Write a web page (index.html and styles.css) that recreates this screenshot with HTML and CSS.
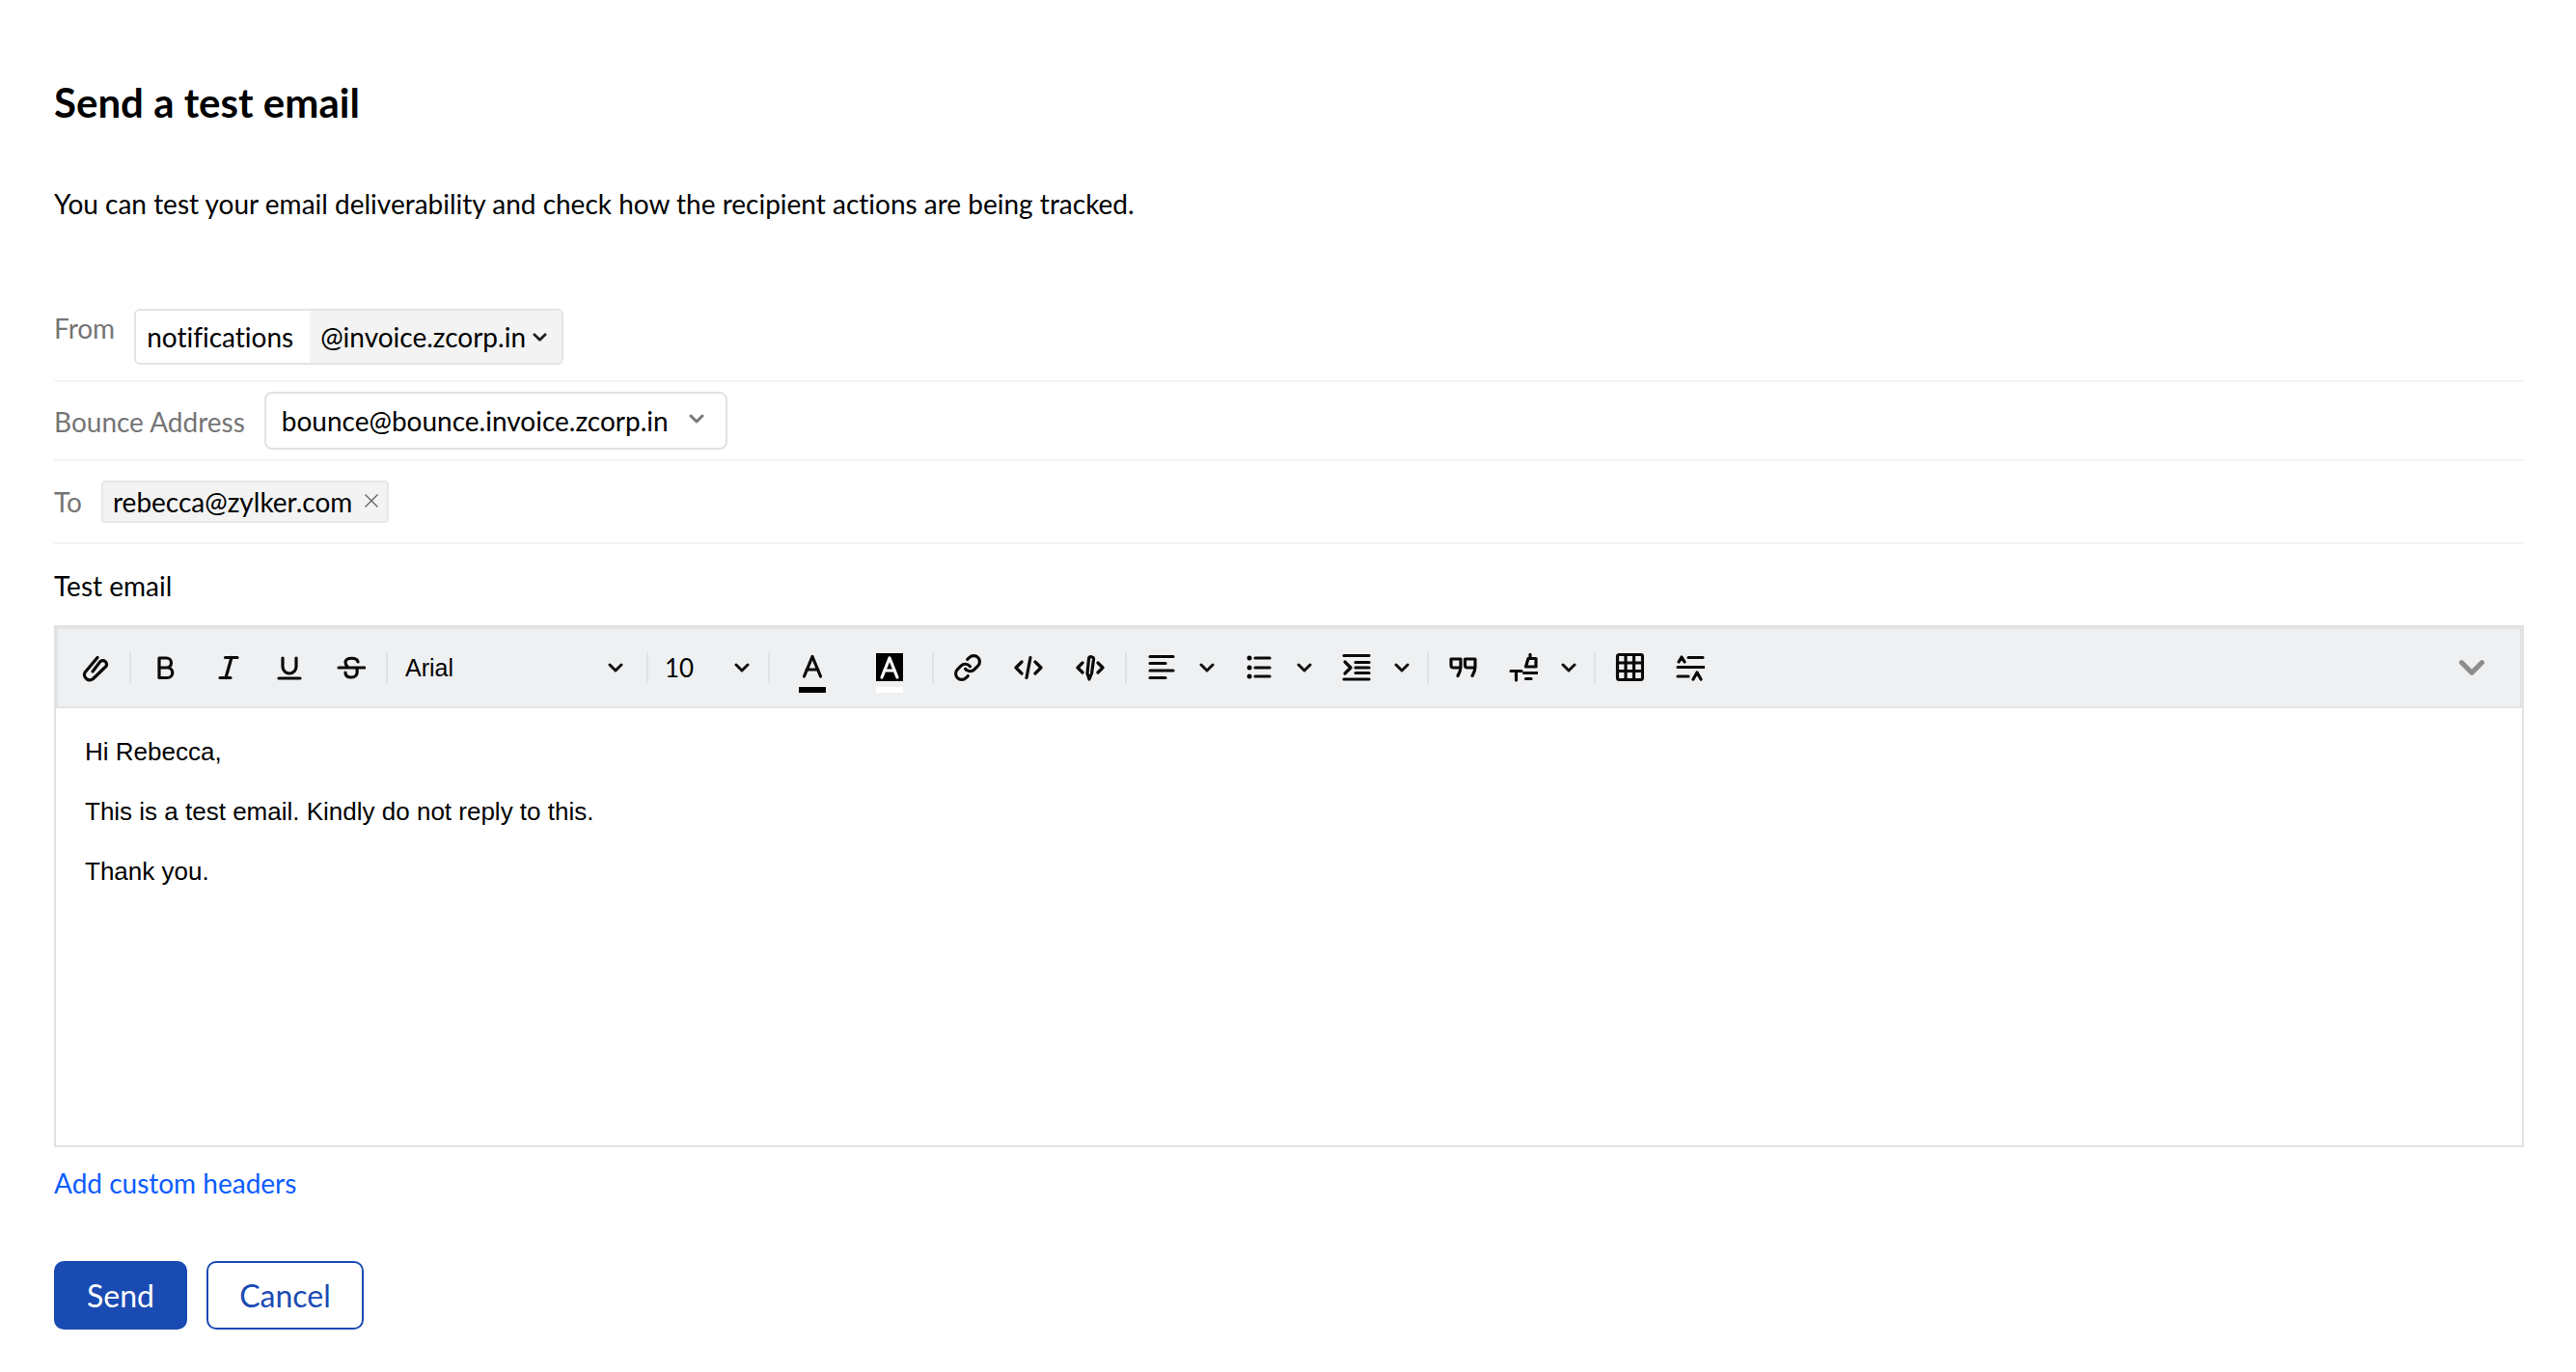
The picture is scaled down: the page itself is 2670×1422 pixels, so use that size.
FILE: index.html
```html
<!DOCTYPE html>
<html lang="en">
<head>
    <meta charset="UTF-8">
    <title>Send a test email</title>
    <link rel="stylesheet" href="styles.css">
</head>
<body>
    <svg class="defs" width="0" height="0">
        <symbol id="chev" viewBox="0 0 16 16"><path d="M2 5l6 6 6-6" fill="none" stroke="currentColor" stroke-width="3" stroke-linecap="round" stroke-linejoin="round"/></symbol>
    </svg>

    <div class="page">
        <h1>Send a test email</h1>
        <p class="intro">You can test your email deliverability and check how the recipient actions are being tracked.</p>

        <div class="row row-from">
            <label class="row-label">From</label>
            <div class="from-box">
                <span class="from-name">notifications</span>
                <span class="from-domain">@invoice.zcorp.in<svg class="chev-sm"><use href="#chev"/></svg></span>
            </div>
        </div>
        <div class="row row-bounce">
            <label class="row-label">Bounce Address</label>
            <div class="bounce-box">
                <span>bounce@bounce.invoice.zcorp.in</span>
                <svg class="chev-grey"><use href="#chev"/></svg>
            </div>
        </div>
        <div class="row row-to">
            <label class="row-label">To</label>
            <div class="chip">
                <span>rebecca@zylker.com</span>
                <svg class="chip-x" viewBox="0 0 14 14"><path d="M.5 .5l13 13M13.500 .5l-13 13" stroke="#666" stroke-width="1.4" fill="none"/></svg>
            </div>
        </div>

        <div class="test-label">Test email</div>

        <div class="editor">
            <div class="toolbar">
                <button class="tb"><svg viewBox="0 0 30 30"><path d="M13 19L21 8.500a4 4 0 0 1 6 5L13.500 26.500a5.500 5.500 0 0 1-8.500-6.500L18 4.500"/></svg></button>
                <i class="sep"></i>
                <button class="tb"><svg viewBox="0 0 30 30"><path d="M8 5h7.500a5 5 0 0 1 0 10H8zM8 15h8.500a5 5 0 0 1 0 10.500H8z"/></svg></button>
                <button class="tb"><svg viewBox="0 0 30 30"><path d="M12.500 4.500H25M7 25.500h11M19 4.500l-6 21"/></svg></button>
                <button class="tb"><svg viewBox="0 0 30 30"><path d="M8 5v9a7 7 0 0 0 14 0V5M4 26h22"/></svg></button>
                <button class="tb"><svg viewBox="0 0 30 30"><path d="M22 9c-1-5-12-5-13 0 0 2 1 4 2 5M2 15h27M21 17c1 6-2 8-6 8s-6-2-6-5"/></svg></button>
                <i class="sep"></i>
                <div class="tb-select font-select"><span>Arial</span><svg class="chev-tb"><use href="#chev"/></svg></div>
                <i class="sep"></i>
                <div class="tb-select size-select"><span>10</span><svg class="chev-tb"><use href="#chev"/></svg></div>
                <i class="sep"></i>
                <button class="tb tb-color"><svg viewBox="0 0 30 42"><path d="M6.500 24L15 3.500 23.500 24M9 17h12"/><rect x="1" y="35" width="28" height="6" class="fill-k"/></svg></button>
                <button class="tb tb-color"><svg viewBox="0 0 30 42"><rect x="1" y="0" width="28" height="29" class="fill-k"/><path class="st-w" d="M7 25L15 5l8 20M9.500 18h11"/><rect x="1" y="35" width="28" height="6" class="fill-w"/></svg></button>
                <i class="sep"></i>
                <button class="tb tb-62"><svg viewBox="0 0 24 24"><path class="thin" d="M10 13a5 5 0 0 0 7.540.540l3-3a5 5 0 0 0-7.070-7.070l-1.720 1.710"/><path class="thin" d="M14 11a5 5 0 0 0-7.540-.540l-3 3a5 5 0 0 0 7.070 7.070l1.710-1.710"/></svg></button>
                <button class="tb"><svg viewBox="0 0 30 30"><path d="M8 9l-6 6 6 6M22 9l6 6-6 6M17 4.500l-4 21"/></svg></button>
                <button class="tb"><svg viewBox="0 0 30 30"><path d="M7 10l-5 5 5 5M23 10l5 5-5 5M13.500 6a2.500 2.500 0 0 1 5 .5L16.500 21 14 27l-2-6z"/></svg></button>
                <i class="sep"></i>
                <button class="tb"><svg viewBox="0 0 30 30"><path d="M3 3.500h24M3 10.500h16M3 18h24M3 25.500h16"/></svg></button>
                <button class="tb-chev"><svg class="chev-tb"><use href="#chev"/></svg></button>
                <button class="tb tb-list"><svg viewBox="0 0 30 30"><path d="M11 5h15M11 15h15M11 24h15"/><circle cx="5" cy="5" r="2.500" class="fill-k"/><circle cx="5" cy="15" r="2.500" class="fill-k"/><circle cx="5" cy="24" r="2.500" class="fill-k"/></svg></button>
                <button class="tb-chev"><svg class="chev-tb"><use href="#chev"/></svg></button>
                <button class="tb tb-list"><svg viewBox="0 0 30 30"><path d="M2 2.500h26M2 27h26M3 9l6 6-6 6M14 9.500h14M14 15h14M14 20.500h14"/></svg></button>
                <button class="tb-chev"><svg class="chev-tb"><use href="#chev"/></svg></button>
                <i class="sep sep-after-chev"></i>
                <button class="tb tb-62"><svg viewBox="0 0 30 30"><path d="M3 6h10v8q0 5-3 9.500M3 6v6.500q0 2.500 2.500 2.500H13M17.500 6H28v8q0 5-3 9.500M17.500 6v6.500q0 2.500 2.500 2.500h8"/></svg></button>
                <button class="tb"><svg viewBox="0 0 30 30"><path d="M2 18.500h11M7.500 18.500V28M22 1.500V5M20 5.500l-2.500 8.500H28V5.500zM15.500 20.500H29.500M17.500 26.500H23"/></svg></button>
                <button class="tb-chev"><svg class="chev-tb"><use href="#chev"/></svg></button>
                <i class="sep sep-after-chev"></i>
                <button class="tb tb-62"><svg viewBox="0 0 30 30"><rect x="2.500" y="1.500" width="26" height="26" rx="2"/><path d="M11 1.500v26M19.500 1.500v26M2.500 10h26M2.500 18.500h26"/></svg></button>
                <button class="tb"><svg viewBox="0 0 30 30"><path d="M3 9l3-5 3 5M13 4.500h15M2 14.500h27M2 24h11M18 27l4-7 4 7"/></svg></button>
                <button class="tb tb-more"><svg class="chev-more"><use href="#chev"/></svg></button>
            </div>
            <div class="editor-body">
                <p>Hi Rebecca,</p>
                <p>This is a test email. Kindly do not reply to this.</p>
                <p>Thank you.</p>
            </div>
        </div>

        <a class="custom-link" href="#">Add custom headers</a>

        <div class="actions">
            <button class="btn btn-primary">Send</button>
            <button class="btn btn-outline">Cancel</button>
        </div>
    </div>
</body>
</html>
```

FILE: styles.css
```css
* {
    margin: 0;
    padding: 0;
    box-sizing: border-box;
}

body {
    font-family: 'Lato', sans-serif;
    font-size: 28px;
    font-variant-ligatures: none;
    background: #fff;
    color: #000;
    overflow: hidden;
}

.defs {
    position: absolute;
}

.page {
    padding: 78px 54px 0 56px;
}

h1 {
    font-size: 42px;
    line-height: 56px;
    font-weight: 700;
}

.intro {
    margin-top: 57px;
    line-height: 40px;
}

.row {
    display: flex;
    gap: 20px;
    border-bottom: 2px solid #f4f4f4;
}

.row-label {
    color: #757575;
}

.row-from {
    margin-top: 89px;
    padding-bottom: 16px;
}

.row-from .row-label {
    line-height: 40px;
}

.row-bounce {
    padding: 10px 0;
}

.row-bounce .row-label {
    line-height: 44px;
    padding-top: 9px;
}

.row-to {
    padding: 20px 0;
}

.row-to .row-label {
    line-height: 44px;
}

.from-box {
    display: flex;
    height: 58px;
    border: 2px solid #e4e4e4;
    border-radius: 6px;
    line-height: 54px;
    overflow: hidden;
}

.from-name {
    width: 180px;
    padding-left: 11px;
}

.from-domain {
    display: flex;
    align-items: center;
    width: 261px;
    padding-left: 11px;
    background: #f3f3f3;
}

.chev-sm {
    width: 15px;
    height: 15px;
    margin-left: 7px;
    color: #222;
}

.bounce-box {
    display: flex;
    align-items: center;
    justify-content: space-between;
    width: 480px;
    height: 60px;
    padding: 0 22px 0 16px;
    border: 2px solid #e2e2e2;
    border-radius: 8px;
}

.chev-grey {
    width: 16px;
    height: 16px;
    margin-top: -4px;
    color: #777;
}

.chip {
    display: flex;
    align-items: center;
    width: 298px;
    height: 44px;
    padding-left: 10px;
    background: #f3f3f3;
    border: 2px solid #e8e8e8;
    border-radius: 4px;
}

.chip-x {
    width: 14px;
    height: 14px;
    margin-left: 13px;
    margin-top: -2px;
}

.test-label {
    margin-top: 25px;
    line-height: 36px;
}

.editor {
    margin-top: 23px;
    height: 541px;
    border: 2px solid #e2e2e2;
}

.toolbar {
    display: flex;
    align-items: center;
    height: 84px;
    padding-left: 6px;
    background: #eff0f2;
    border: 2px solid #e2e3e4;
}

.tb,
.tb-chev {
    display: flex;
    flex: none;
    align-items: center;
    justify-content: center;
    width: 64px;
    height: 40px;
    background: none;
    border: none;
}

.tb svg {
    width: 30px;
    height: 30px;
    fill: none;
    stroke: #0a0a0a;
    stroke-width: 3.2;
    stroke-linecap: round;
    stroke-linejoin: round;
}

.tb svg .thin {
    stroke-width: 2.5;
}

.tb svg .fill-k {
    fill: #000;
    stroke: none;
}

.tb svg .fill-w {
    fill: #fff;
    stroke: none;
}

.tb svg .st-w {
    stroke: #fff;
}

.tb-62 {
    width: 62px;
}

.tb-chev {
    width: 30px;
}

.tb-list {
    margin-left: 7px;
}

.tb-color {
    width: 80px;
}

.tb-color svg {
    height: 42px;
    margin-top: 12px;
}

.sep {
    flex: none;
    width: 2px;
    height: 32px;
    margin: 0 4px;
    background: #e0e1e3;
}

.sep-after-chev {
    margin-left: 11px;
}

.tb-select {
    display: flex;
    flex: none;
    align-items: center;
    justify-content: space-between;
}

.font-select {
    width: 260px;
    padding: 0 20px 0 14px;
    font-family: 'Liberation Sans', sans-serif;
    font-size: 25px;
}

.size-select {
    width: 116px;
    padding: 0 15px 0 13px;
    font-size: 26px;
}

.chev-tb {
    width: 16px;
    height: 16px;
    color: #111;
}

.tb-more {
    margin-left: auto;
    margin-right: 18px;
}

.tb-more .chev-more {
    width: 28px;
    height: 28px;
    stroke: none;
    color: #8d8d8d;
}

.editor-body {
    padding: 14px 0 0 30px;
    font-family: 'Liberation Sans', sans-serif;
    font-size: 26px;
    line-height: 62px;
}

.custom-link {
    display: block;
    margin-top: 19px;
    line-height: 36px;
    color: #0b5cff;
    text-decoration: none;
}

.actions {
    display: flex;
    gap: 20px;
    margin-top: 63px;
}

.btn {
    height: 71px;
    font-family: 'Lato', sans-serif;
    font-size: 32px;
    border-radius: 10px;
}

.btn-primary {
    width: 138px;
    color: #fff;
    background: #1a4bb3;
    border: none;
}

.btn-outline {
    width: 163px;
    color: #1a4bb3;
    background: #fff;
    border: 2px solid #1a4bb3;
}
```
